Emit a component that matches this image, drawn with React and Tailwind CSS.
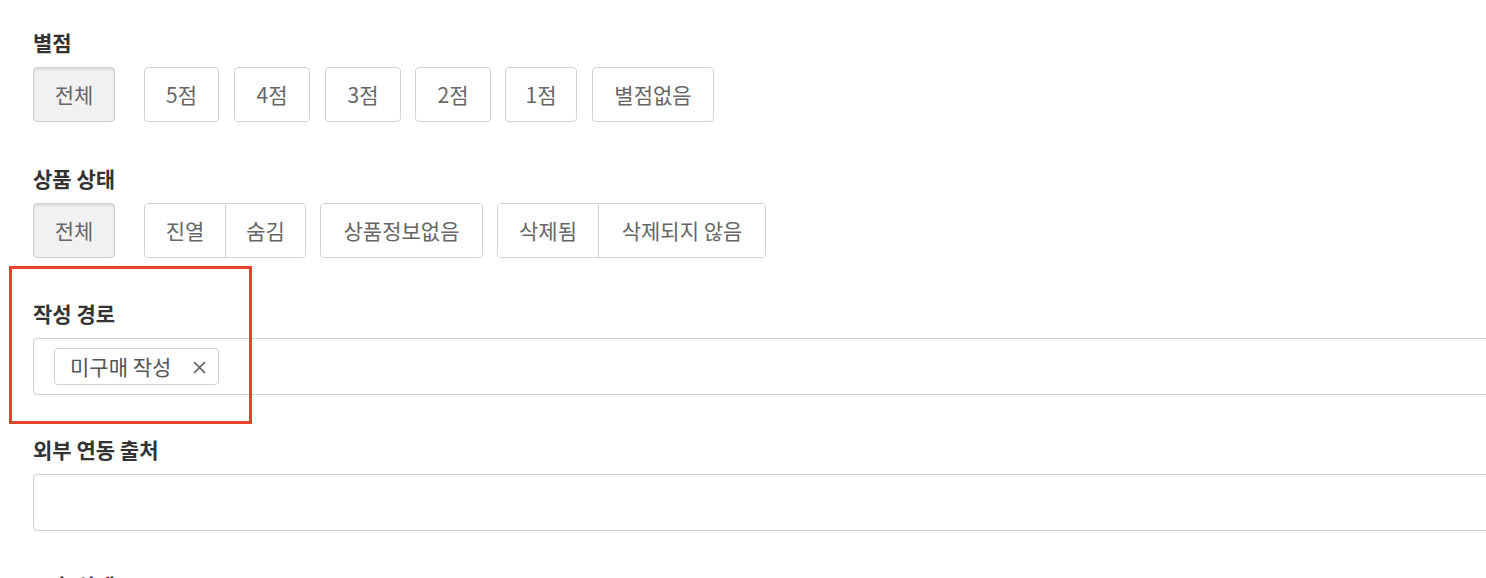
import React from 'react';

const font = { fontFamily: '"Noto Sans CJK KR", "Noto Sans", sans-serif' };

const ratings = [
  { t: '5점', w: 'w-[75px]', m: 'ml-[29px]' },
  { t: '4점', w: 'w-[76px]', m: 'ml-[15px]' },
  { t: '3점', w: 'w-[76px]', m: 'ml-[15px]' },
  { t: '2점', w: 'w-[76px]', m: 'ml-[14px]' },
  { t: '1점', w: 'w-[72px]', m: 'ml-[14px]' },
  { t: '별점없음', w: 'w-[122px]', m: 'ml-[15px]' },
];

const btnText = 'flex items-center justify-center text-[21px] text-[#666] bg-white';

const Label = ({ children }) => (
  <div className="h-[28px] mb-[11px] flex items-center text-[21px] font-bold text-[#333] leading-none">
    {children}
  </div>
);

const AllButton = () => (
  <button className="h-[55px] w-[82px] flex items-center justify-center text-[21px] text-[#666] bg-[#f1f1f3] border border-[#cfcfd3] rounded-[4px] shadow-[inset_0_2px_3px_rgba(0,0,0,0.08)]">
    전체
  </button>
);

// grouped buttons share one outer border, so inner height = 55 - 2
const Group = ({ items }) => (
  <div className="flex border border-[#d2d2d2] rounded-[4px] overflow-hidden">
    {items.map((it, i) => (
      <button key={it.t} className={`h-[53px] ${btnText} ${it.w} ${i > 0 ? 'border-l border-[#d2d2d2]' : ''}`}>
        {it.t}
      </button>
    ))}
  </div>
);

export default function App() {
  return (
    <div className="relative w-full h-[578px] overflow-hidden bg-white" style={font}>
      <div className="pl-[33px]">
        <section className="pt-[28px]">
          <Label>별점</Label>
          <div className="flex items-center">
            <AllButton />
            {ratings.map(r => (
              <button key={r.t} className={`h-[55px] ${btnText} ${r.w} ${r.m} border border-[#d2d2d2] rounded-[4px]`}>
                {r.t}
              </button>
            ))}
          </div>
        </section>

        <section className="mt-[42px]">
          <Label>상품 상태</Label>
          <div className="flex items-center">
            <AllButton />
            <div className="flex items-center gap-[14px] ml-[29px]">
              <Group items={[{ t: '진열', w: 'w-[80px]' }, { t: '숨김', w: 'w-[80px]' }]} />
              <Group items={[{ t: '상품정보없음', w: 'w-[161px]' }]} />
              <Group items={[{ t: '삭제됨', w: 'w-[100px]' }, { t: '삭제되지 않음', w: 'w-[167px]' }]} />
            </div>
          </div>
        </section>

        <section className="mt-[41px]">
          <Label>작성 경로</Label>
          <div className="w-[1500px] h-[57px] border border-[#cfcfcf] rounded-[4px] pl-[20px] flex items-center">
            <span className="w-[165px] h-[37px] pl-[15px] pr-[12px] flex items-center justify-between border border-[#cfcfcf] rounded-[4px] text-[21px] text-[#555]">
              미구매 작성
              <svg width="13" height="13" viewBox="0 0 13 13" className="mt-[1px]">
                <path d="M1.5 1.5 L11.5 11.5 M11.5 1.5 L1.5 11.5" stroke="#555" strokeWidth="1.5" strokeLinecap="round" />
              </svg>
            </span>
          </div>
        </section>

        <section className="mt-[40px]">
          <Label>외부 연동 출처</Label>
          <div className="w-[1500px] h-[57px] border border-[#cfcfcf] rounded-[4px]" />
        </section>

        <section className="mt-[40px]">
          <Label>노출 상태</Label>
        </section>
      </div>

      <div className="absolute left-[9px] top-[266px] w-[243px] h-[158px] border-[3px] border-[#e8412c]" />
    </div>
  );
}
